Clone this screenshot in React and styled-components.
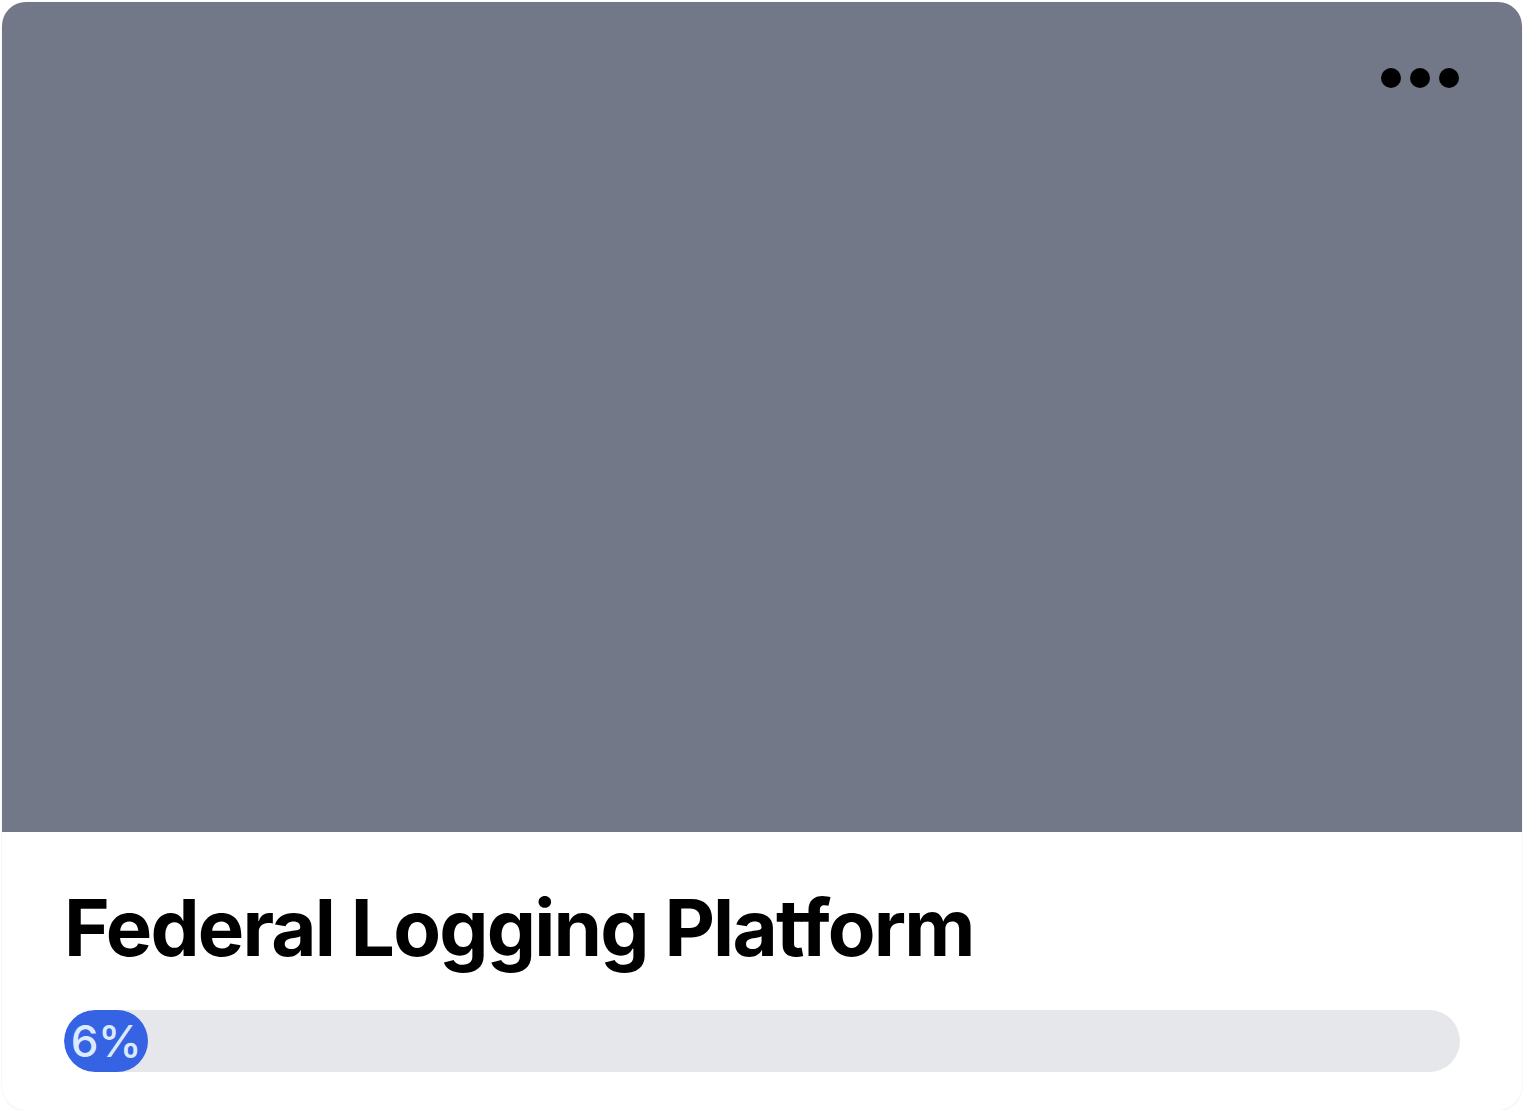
import React from 'react';
import styled, { createGlobalStyle } from 'styled-components';

const GlobalStyle = createGlobalStyle`
    html, body {
        margin: 0;
        padding: 0;
        background: #ffffff;
        font-family: Inter, "Noto Sans", sans-serif;
    }
`;

const Page = styled.div`
    padding: 2px 6px 0 2px;
`;

const Card = styled.div`
    height: 1108px;
    border-radius: 24px;
    overflow: hidden;
    background: #ffffff;
    box-shadow: 0 1px 2px rgba(0, 0, 0, 0.05), 0 0 0 1px rgba(0, 0, 0, 0.015);
    display: flex;
    flex-direction: column;
`;

const Cover = styled.div`
    position: relative;
    height: 830px;
    background: #737889;
`;

const MenuButton = styled.button`
    position: absolute;
    top: 66px;
    right: 63px;
    padding: 0;
    border: none;
    background: none;
    display: flex;
    gap: 9px;
    cursor: pointer;
`;

const Dot = styled.span`
    width: 20px;
    height: 20px;
    border-radius: 50%;
    background: #000000;
`;

const Body = styled.div`
    padding: 57px 62px 38px;
    display: flex;
    flex-direction: column;
    gap: 43px;
`;

const Title = styled.h2`
    margin: 0;
    font-size: 78px;
    line-height: 1;
    font-weight: 700;
    color: #000000;
    letter-spacing: -1.8px;
`;

const Track = styled.div`
    height: 62px;
    border-radius: 999px;
    background: #e5e7eb;
    overflow: hidden;
`;

const Fill = styled.div`
    height: 100%;
    border-radius: 999px;
    background: #3563e3;
    color: #dbeafe;
    display: flex;
    align-items: center;
    justify-content: center;
    font-size: 44px;
    font-weight: 500;
    letter-spacing: -0.5px;
    white-space: nowrap;
`;

function ProjectCard({ title, progress }) {
    return (
        <Card>
            <Cover>
                <MenuButton aria-label="More options">
                    <Dot />
                    <Dot />
                    <Dot />
                </MenuButton>
            </Cover>
            <Body>
                <Title>{title}</Title>
                <Track>
                    <Fill style={{ width: `${progress}%` }}>{progress}%</Fill>
                </Track>
            </Body>
        </Card>
    );
}

export default function App() {
    return <>
        <GlobalStyle />
        <Page>
            <ProjectCard title="Federal Logging Platform" progress={6} />
        </Page>
    </>;
}
